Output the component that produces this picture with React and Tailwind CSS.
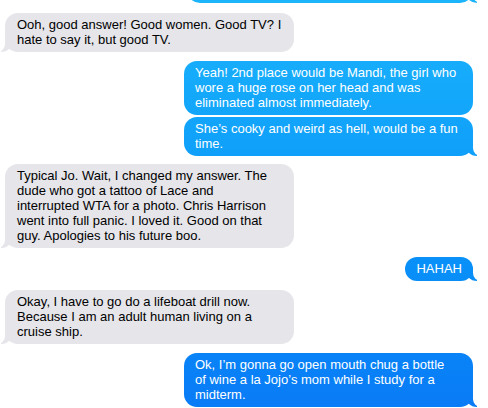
const blue = 'bg-fixed bg-linear-to-b from-[#1cb5fc] to-[#0a7bf6]'

function Tail({ side, color }) {
  if (side === 'left') {
    return (
      <>
        <span className={`absolute bottom-0 -left-[4px] h-[14px] w-[12px] rounded-br-[12px] ${color}`} />
        <span className="absolute bottom-0 -left-[12px] h-[14px] w-[12px] rounded-br-[8px] bg-white" />
      </>
    )
  }
  return (
    <>
      <span className={`absolute bottom-0 -right-[4px] h-[14px] w-[12px] rounded-bl-[12px] ${color}`} />
      <span className="absolute bottom-0 -right-[12px] h-[14px] w-[12px] rounded-bl-[8px] bg-white" />
    </>
  )
}

function Them({ lines, className = '' }) {
  return (
    <div className={`relative ml-[5px] w-[289px] rounded-[13px] bg-[#e5e5ea] pl-[12px] pt-[4px] pb-[5px] text-black ${className}`}>
      {lines.map((l) => (
        <div key={l} className="whitespace-nowrap">{l}</div>
      ))}
      <Tail side="left" color="bg-[#e5e5ea]" />
    </div>
  )
}

function Me({ lines, tail = true, className = '' }) {
  return (
    <div className={`relative self-end mr-[15px] w-[289px] rounded-[13px] pl-[11px] pt-[4px] pb-[5px] text-white ${blue} ${className}`}>
      {lines.map((l) => (
        <div key={l} className="whitespace-nowrap">{l}</div>
      ))}
      {tail && <Tail side="right" color={blue} />}
    </div>
  )
}

export default function App() {
  return (
    <div className="w-[488px] h-[408px] overflow-hidden bg-white flex flex-col font-['Liberation_Sans',Arial,sans-serif] text-[13px] leading-[15px]">
      {/* end of previous message */}
      <div className={`relative self-end mr-[15px] -mt-[37px] h-[40px] w-[286px] rounded-[13px] ${blue}`}>
        <Tail side="right" color={blue} />
      </div>

      <Them
        className="mt-[10px]"
        lines={['Ooh, good answer! Good women. Good TV? I', 'hate to say it, but good TV.']}
      />

      <Me
        className="mt-[9px]"
        tail={false}
        lines={[
          'Yeah! 2nd place would be Mandi, the girl who',
          'wore a huge rose on her head and was',
          'eliminated almost immediately.',
        ]}
      />
      <Me
        className="mt-[2px]"
        lines={['She’s cooky and weird as hell, would be a fun', 'time.']}
      />

      <Them
        className="mt-[8px]"
        lines={[
          'Typical Jo. Wait, I changed my answer. The',
          'dude who got a tattoo of Lace and',
          'interrupted WTA for a photo. Chris Harrison',
          'went into full panic. I loved it. Good on that',
          'guy. Apologies to his future boo.',
        ]}
      />

      <div className={`relative self-end mr-[15px] mt-[9px] rounded-[13px] px-[11px] pt-[4px] pb-[5px] text-white ${blue}`}>
        HAHAH
        <Tail side="right" color={blue} />
      </div>

      <Them
        className="mt-[9px]"
        lines={[
          'Okay, I have to go do a lifeboat drill now.',
          'Because I am an adult human living on a',
          'cruise ship.',
        ]}
      />

      <Me
        className="mt-[9px]"
        lines={[
          'Ok, I’m gonna go open mouth chug a bottle',
          'of wine a la Jojo’s mom while I study for a',
          'midterm.',
        ]}
      />
    </div>
  )
}
